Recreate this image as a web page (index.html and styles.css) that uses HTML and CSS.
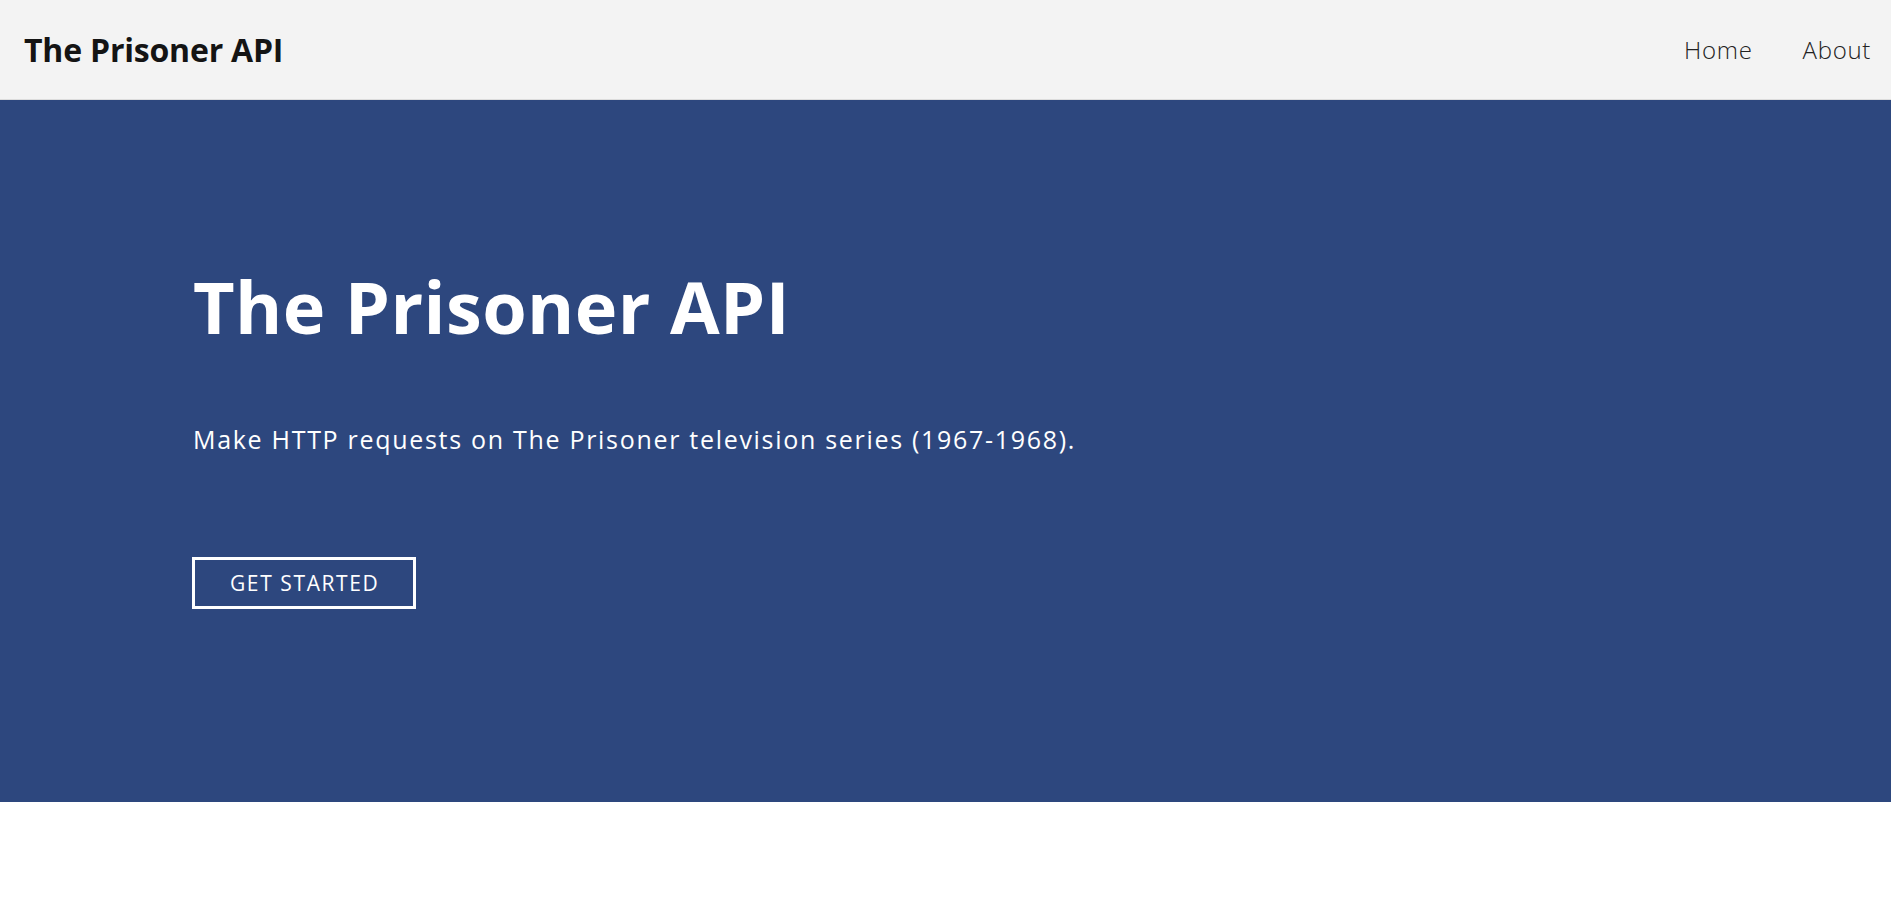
FILE: index.html
```html
<!DOCTYPE html>
<html lang="en">
<head>
<meta charset="utf-8">
<title>The Prisoner API</title>
<link rel="stylesheet" href="styles.css">
</head>
<body>
<header class="navbar">
  <a class="brand" href="#">The Prisoner API</a>
  <nav class="nav-links">
    <a class="nav-link" href="#">Home</a>
    <a class="nav-link" href="#">About</a>
  </nav>
</header>
<section class="hero">
  <div class="hero-inner">
    <h1 class="hero-title">The Prisoner API</h1>
    <p class="hero-sub">Make HTTP requests on The Prisoner television series (1967-1968).</p>
    <a class="hero-btn" href="#">GET STARTED</a>
  </div>
</section>
</body>
</html>
```
FILE: styles.css
```css
* { box-sizing: border-box; }
html, body { margin: 0; padding: 0; }
body {
  font-family: "Open Sans", "Noto Sans", "DejaVu Sans", sans-serif;
  background: #ffffff;
  color: #111;
}
a { text-decoration: none; }

.navbar {
  height: 100px;
  background: #f3f3f3;
  border-bottom: 1px solid #dcdcdc;
  display: flex;
  align-items: center;
  justify-content: space-between;
  padding: 0 20px 0 24px;
}
.brand {
  font-size: 32px;
  font-weight: 700;
  color: #141414;
  letter-spacing: -0.2px;
  line-height: 1;
}
.nav-links {
  display: flex;
  gap: 50px;
}
.nav-link {
  font-size: 24px;
  font-weight: 300;
  color: #222;
  letter-spacing: 0.7px;
  line-height: 1;
}

.hero {
  background: #2d477e;
  height: 702px;
  color: #fff;
}
.hero-inner {
  padding: 163px 0 0 193px;
  display: flex;
  flex-direction: column;
  align-items: flex-start;
}
.hero-title {
  margin: 0;
  font-size: 72px;
  line-height: 1.2;
  font-weight: 700;
  letter-spacing: 0.4px;
}
.hero-sub {
  margin: 72px 0 0;
  font-size: 25px;
  line-height: 1.5;
  letter-spacing: 1.7px;
}
.hero-btn {
  margin-top: 98px;
  margin-left: -1px;
  border: 3px solid #fff;
  color: #fff;
  font-size: 21px;
  line-height: 46px;
  padding: 0 34px 0 35px;
  letter-spacing: 1.6px;
}
```
